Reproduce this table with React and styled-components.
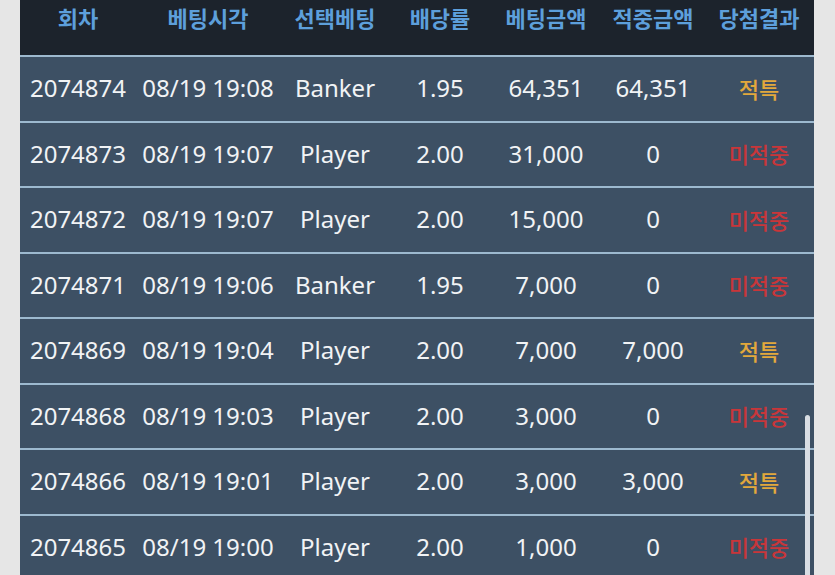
import React from "react";
import styled, { createGlobalStyle } from "styled-components";

const GlobalStyle = createGlobalStyle`
  html, body {
    margin: 0;
    padding: 0;
    background: #e6e6e6;
    overflow: hidden;
  }
  body {
    font-family: "Noto Sans", "Noto Sans CJK KR", sans-serif;
  }
`;

const Page = styled.div`
  width: 835px;
  height: 575px;
  overflow: hidden;
  padding-left: 20px;
  box-sizing: border-box;
`;

const Board = styled.div`
  position: relative;
  width: 794px;
  background: #3d5064;
`;

const Table = styled.table`
  width: 100%;
  border-collapse: collapse;
  table-layout: fixed;
`;

const HeadCell = styled.th`
  height: 56px;
  padding: 0 0 22px;
  background: #1c232c;
  color: #5d9fdb;
  font-family: "Noto Sans CJK KR", "Noto Sans", sans-serif;
  font-size: 22px;
  font-weight: 700;
  text-align: center;
  vertical-align: middle;
  border-bottom: 2px solid #9db9cf;
  white-space: nowrap;
  box-sizing: border-box;
`;

const Row = styled.tr`
  height: 65.5px;
  border-bottom: 2px solid #9db9cf;
`;

const Cell = styled.td`
  padding: 0 0 2px;
  color: ${(p) => p.$tone || "#f1f3f5"};
  font-family: ${(p) =>
    p.$tone ? `"Noto Sans CJK KR", "Noto Sans", sans-serif` : `"Noto Sans", "Noto Sans CJK KR", sans-serif`};
  font-size: ${(p) => (p.$tone ? "22px" : "24px")};
  font-weight: ${(p) => (p.$tone ? 500 : 400)};
  text-align: center;
  vertical-align: middle;
  white-space: nowrap;
`;

const ScrollThumb = styled.div`
  position: absolute;
  left: 785px;
  top: 415px;
  width: 5px;
  height: 200px;
  border-radius: 3px;
  background: #d9dde3;
`;

const widths = [116, 144, 110, 100, 112, 102, 110];
const headers = ["회차", "베팅시각", "선택베팅", "배당률", "베팅금액", "적중금액", "당첨결과"];

const WIN = "#e2a83c";
const LOSE = "#c8363a";

const rows = [
  ["2074874", "08/19 19:08", "Banker", "1.95", "64,351", "64,351", "적특"],
  ["2074873", "08/19 19:07", "Player", "2.00", "31,000", "0", "미적중"],
  ["2074872", "08/19 19:07", "Player", "2.00", "15,000", "0", "미적중"],
  ["2074871", "08/19 19:06", "Banker", "1.95", "7,000", "0", "미적중"],
  ["2074869", "08/19 19:04", "Player", "2.00", "7,000", "7,000", "적특"],
  ["2074868", "08/19 19:03", "Player", "2.00", "3,000", "0", "미적중"],
  ["2074866", "08/19 19:01", "Player", "2.00", "3,000", "3,000", "적특"],
  ["2074865", "08/19 19:00", "Player", "2.00", "1,000", "0", "미적중"],
];

export default function App() {
  return (
    <>
      <GlobalStyle />
      <Page>
        <Board>
          <Table>
            <colgroup>
              {widths.map((w, i) => (
                <col key={i} style={{ width: w }} />
              ))}
            </colgroup>
            <thead>
              <tr>
                {headers.map((h) => (
                  <HeadCell key={h}>{h}</HeadCell>
                ))}
              </tr>
            </thead>
            <tbody>
              {rows.map((r) => (
                <Row key={r[0]}>
                  {r.slice(0, 6).map((v, i) => (
                    <Cell key={i}>{v}</Cell>
                  ))}
                  <Cell $tone={r[6] === "적특" ? WIN : LOSE}>{r[6]}</Cell>
                </Row>
              ))}
            </tbody>
          </Table>
          <ScrollThumb />
        </Board>
      </Page>
    </>
  );
}
